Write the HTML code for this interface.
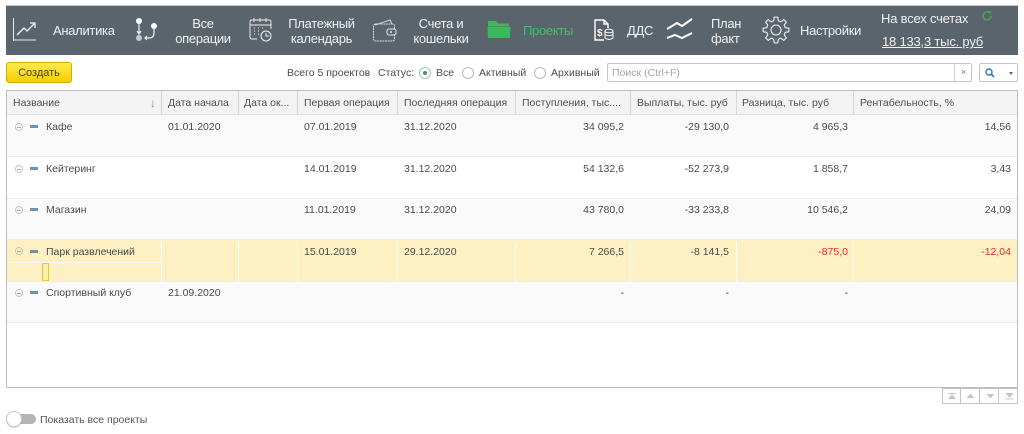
<!DOCTYPE html>
<html><head><meta charset="utf-8">
<style>
*{box-sizing:border-box}
html,body{margin:0;padding:0;width:1024px;height:434px;overflow:hidden;background:#fff}
body{font-family:"Liberation Sans",sans-serif;font-size:10.5px;color:#4b4b4b;position:relative}
.a{position:absolute;white-space:nowrap}
#nav{position:absolute;left:6px;top:5px;width:1012px;height:50px;background:#5a646c;border-top:1px solid #c9c9c9}
.n{position:absolute;color:#f2f2f2;font-size:13px;line-height:15px;text-align:center;white-space:nowrap;letter-spacing:-.3px}
.ic{position:absolute;overflow:visible;fill:none;stroke:#f0f0f0;stroke-width:1}
.th{position:absolute;top:91px;height:24px;line-height:24px;padding-left:6px;background:#f3f3f3;border-right:1px solid #d6d6d6;border-bottom:1px solid #e2e2e2;white-space:nowrap;color:#4e4e4e}
.row{position:absolute;left:7px;width:1010px;border-bottom:1px solid #ececec}
.c{position:absolute;line-height:13px;white-space:nowrap;color:#4a4a4a;margin-top:1px}
.r{text-align:right}
.m{position:absolute;left:15px;width:8px;height:8px;border:1px solid #c5c5c5;border-radius:50%}
.m:after{content:"";position:absolute;left:1px;top:2.5px;width:4px;height:1px;background:#aaa}
.d{position:absolute;left:30px;width:8px;height:3px;background:#6d92b5}
.v{position:absolute;width:1px;background:#fff}
.rad{position:absolute;top:67px;width:12px;height:12px;border:1px solid #b8b8b8;border-radius:50%;background:#fff}
.sb{position:absolute;top:388px;width:19px;height:16px;border:1px solid #c4c4c4;border-left:0;background:#fff}
</style></head><body>
<div id="nav"></div>

<svg class="ic" style="left:13px;top:18px" width="24" height="24" viewBox="0 0 24 24"><path d="M.5 0V23M0 22H23" stroke="#e8e8e8"/><path d="M4 17L11 10L14 13L21 6M17 5H22V10" stroke="#f5f5f5" stroke-width="1.3"/></svg>
<div class="n" style="left:53px;top:23px">Аналитика</div>

<svg class="ic" style="left:135px;top:18px" width="24" height="24" viewBox="0 0 24 24"><circle cx="4" cy="3" r="3" fill="#fff" stroke="none"/><circle cx="19" cy="8" r="3" fill="#fff" stroke="none"/><circle cx="4" cy="20" r="3" fill="#c8c8c8" stroke="none"/><path d="M4 6V15M2 13L4 16L6 13M19 11V15Q19 20 14 20H10M12 18L10 20L12 22" stroke-width="1.2"/></svg>
<div class="n" style="left:174px;top:16px;width:58px">Все<br>операции</div>

<svg class="ic" style="left:249px;top:18px" width="24" height="25" viewBox="0 0 24 25"><path d="M8 21H3Q1 21 1 19V4Q1 2 3 2H20Q22 2 22 4V11M1 7H22M5 0V4M11 0V4M17 0V4" stroke-width=".9"/><path d="M5 10H7M9 10H11M13 10H15M5 13H7M9 13H11M5 16H7M9 16H11" stroke-dasharray="1 1"/><circle cx="17" cy="18" r="5" stroke-width="1"/><path d="M17 15V18H20"/></svg>
<div class="n" style="left:284px;top:16px;width:75px">Платежный<br>календарь</div>

<svg class="ic" style="left:373px;top:19px" width="24" height="23" viewBox="0 0 24 23"><path d="M2 6L17 1L19 5" stroke="#d8d8d8"/><rect x=".5" y="5" width="21" height="17" rx="2" stroke="#d8d8d8" stroke-dasharray="2 .6"/><rect x="14" y="10" width="9" height="6" rx="2" fill="#5a646c" stroke="#e8e8e8"/><circle cx="18" cy="13" r="1" fill="#eee" stroke="none"/></svg>
<div class="n" style="left:408px;top:16px;width:66px">Счета и<br>кошельки</div>

<svg class="ic" style="left:487px;top:20px" width="24" height="19" viewBox="0 0 24 19"><path d="M1 1H9L11 3.5H22V6.4H1Z M.5 6.9H23.5L23 18H1Z" fill="#3cb85c" stroke="none"/></svg>
<div class="n" style="left:523px;top:23px;color:#43c069">Проекты</div>

<svg class="ic" style="left:594px;top:19px" width="20" height="22" viewBox="0 0 20 22"><path d="M10 21H1V1H10L14 5V9M10 1V5H14" stroke-width="1.4" stroke="#fff"/><text x="3" y="17" font-family="Liberation Sans" font-size="10" font-weight="bold" fill="#fff" stroke="none">$</text><ellipse cx="15" cy="12" rx="4" ry="1.8" stroke="#fff"/><path d="M11 12V19Q15 22 19 19V12M11 15.5Q15 18 19 15.5" stroke="#fff"/></svg>
<div class="n" style="left:627px;top:23px">ДДС</div>

<svg class="ic" style="left:666px;top:18px" width="27" height="24" viewBox="0 0 27 24"><path d="M1 11L11 5L16 8L26 1M1 20L9 17L16 20L26 15" stroke="#fff" stroke-width="2"/></svg>
<div class="n" style="left:711px;top:16px;text-align:left">План<br>факт</div>

<svg class="ic" style="left:762px;top:16px" width="28" height="28" viewBox="0 0 28 28"><circle cx="14" cy="14" r="5" stroke-width="1.1"/><g stroke-width="1.1" stroke-linejoin="round"><path id="t" d="M11.7 4.78L12.19 1.13H15.81L16.3 4.78A9.5 9.5 0 0 1 18.89 5.86"/><path transform="rotate(45 14 14)" d="M11.7 4.78L12.19 1.13H15.81L16.3 4.78A9.5 9.5 0 0 1 18.89 5.86"/><path transform="rotate(90 14 14)" d="M11.7 4.78L12.19 1.13H15.81L16.3 4.78A9.5 9.5 0 0 1 18.89 5.86"/><path transform="rotate(135 14 14)" d="M11.7 4.78L12.19 1.13H15.81L16.3 4.78A9.5 9.5 0 0 1 18.89 5.86"/><path transform="rotate(180 14 14)" d="M11.7 4.78L12.19 1.13H15.81L16.3 4.78A9.5 9.5 0 0 1 18.89 5.86"/><path transform="rotate(225 14 14)" d="M11.7 4.78L12.19 1.13H15.81L16.3 4.78A9.5 9.5 0 0 1 18.89 5.86"/><path transform="rotate(270 14 14)" d="M11.7 4.78L12.19 1.13H15.81L16.3 4.78A9.5 9.5 0 0 1 18.89 5.86"/><path transform="rotate(315 14 14)" d="M11.7 4.78L12.19 1.13H15.81L16.3 4.78A9.5 9.5 0 0 1 18.89 5.86"/></g></svg>
<div class="n" style="left:800px;top:23px">Настройки</div>

<div class="n" style="left:881px;top:11px;font-size:13px;letter-spacing:-.2px">На всех счетах</div>
<svg class="ic" style="left:981px;top:10px" width="12" height="12" viewBox="0 0 12 12"><path d="M10 6A4 4 0 1 1 8.5 2.8" stroke="#3fa84f" stroke-width="1.5"/><path d="M7.5 1L10.5 1.2L10 4.5Z" fill="#3fa84f" stroke="none"/></svg>
<div class="n" style="left:882px;top:34px;font-size:13px;letter-spacing:-.2px;text-decoration:underline">18 133,3 тыс. руб</div>

<div class="a" style="left:6px;top:62px;width:66px;height:21px;background:linear-gradient(#ffe94d,#f6cf00);border:1px solid #cfae00;border-radius:3px;text-align:center;line-height:20px;font-size:11px;color:#4a4320">Создать</div>

<div class="a" style="left:287px;top:67px">Всего 5 проектов</div>
<div class="a" style="left:378px;top:67px">Статус:</div>
<div class="rad" style="left:419px"></div><div class="a" style="left:423px;top:71px;width:4px;height:4px;border-radius:50%;background:#2f9e5f"></div>
<div class="a" style="left:436px;top:67px">Все</div>
<div class="rad" style="left:462px"></div>
<div class="a" style="left:479px;top:67px">Активный</div>
<div class="rad" style="left:534px"></div>
<div class="a" style="left:551px;top:67px">Архивный</div>

<div class="a" style="left:607px;top:63px;width:365px;height:19px;border:1px solid #c6c6c6;border-radius:2px;background:#fff;line-height:18px;padding-left:4px;color:#a5a5a5">Поиск (Ctrl+F)</div>
<div class="a" style="left:954px;top:64px;width:18px;height:17px;border-left:1px solid #d0d0d0;text-align:center;line-height:17px;font-size:9px;color:#777">×</div>
<div class="a" style="left:979px;top:63px;width:39px;height:19px;border:1px solid #c6c6c6;border-radius:2px;background:#fff"></div>
<svg class="ic" style="left:984px;top:67px" width="12" height="12" viewBox="0 0 12 12"><circle cx="5" cy="5" r="3" stroke="#2f78b5" stroke-width="1.4"/><path d="M7 7L10 10" stroke="#2f78b5" stroke-width="1.8"/></svg>
<div class="a" style="left:1009px;top:72px;border:2px solid transparent;border-top:3px solid #666"></div>

<div class="a" style="left:6px;top:90px;width:1012px;height:298px;border:1px solid #bdbdbd;background:#fff"></div>

<div class="row" style="top:115px;height:42px;background:#fafafa"></div>
<div class="row" style="top:157px;height:42px;background:#fff"></div>
<div class="row" style="top:199px;height:41px;background:#fafafa"></div>
<div class="row" style="top:240px;height:42px;background:#fdf1c3;border-bottom:1px solid #eee"></div>
<div class="row" style="top:282px;height:41px;background:#fafafa"></div>

<div class="v" style="left:161px;top:241px;height:40px"></div>
<div class="v" style="left:238px;top:241px;height:40px"></div>
<div class="v" style="left:297px;top:241px;height:40px"></div>
<div class="v" style="left:397px;top:241px;height:40px"></div>
<div class="v" style="left:515px;top:241px;height:40px"></div>
<div class="v" style="left:630px;top:241px;height:40px"></div>
<div class="v" style="left:736px;top:241px;height:40px"></div>
<div class="v" style="left:853px;top:241px;height:40px"></div>
<div class="a" style="left:7px;top:262px;width:154px;height:1px;background:#fff"></div>
<div class="a" style="left:42px;top:263px;width:7px;height:18px;background:#fdeeb0;border:1px solid #f3c52b"></div>

<div class="th" style="left:7px;width:155px">Название</div>
<div class="a" style="left:150px;top:96px;font-size:12px;color:#888">↓</div>
<div class="th" style="left:162px;width:77px">Дата начала</div>
<div class="th" style="left:239px;width:59px;padding-left:5px">Дата ок...</div>
<div class="th" style="left:298px;width:100px">Первая операция</div>
<div class="th" style="left:398px;width:118px">Последняя операция</div>
<div class="th" style="left:516px;width:115px">Поступления, тыс....</div>
<div class="th" style="left:631px;width:106px">Выплаты, тыс. руб</div>
<div class="th" style="left:737px;width:117px;padding-left:5px">Разница, тыс. руб</div>
<div class="th" style="left:854px;width:163px;border-right:0">Рентабельность, %</div>

<!-- row 1 -->
<div class="m" style="top:123px"></div><div class="d" style="top:125px"></div>
<div class="c" style="left:46px;top:120px">Кафе</div>
<div class="c" style="left:168px;top:120px">01.01.2020</div>
<div class="c" style="left:304px;top:120px">07.01.2019</div>
<div class="c" style="left:404px;top:120px">31.12.2020</div>
<div class="c r" style="left:516px;width:108px;top:120px">34 095,2</div>
<div class="c r" style="left:631px;width:98px;top:120px">-29 130,0</div>
<div class="c r" style="left:737px;width:111px;top:120px">4 965,3</div>
<div class="c r" style="left:854px;width:157px;top:120px">14,56</div>
<!-- row 2 -->
<div class="m" style="top:165px"></div><div class="d" style="top:167px"></div>
<div class="c" style="left:46px;top:162px">Кейтеринг</div>
<div class="c" style="left:304px;top:162px">14.01.2019</div>
<div class="c" style="left:404px;top:162px">31.12.2020</div>
<div class="c r" style="left:516px;width:108px;top:162px">54 132,6</div>
<div class="c r" style="left:631px;width:98px;top:162px">-52 273,9</div>
<div class="c r" style="left:737px;width:111px;top:162px">1 858,7</div>
<div class="c r" style="left:854px;width:157px;top:162px">3,43</div>
<!-- row 3 -->
<div class="m" style="top:206px"></div><div class="d" style="top:208px"></div>
<div class="c" style="left:46px;top:203px">Магазин</div>
<div class="c" style="left:304px;top:203px">11.01.2019</div>
<div class="c" style="left:404px;top:203px">31.12.2020</div>
<div class="c r" style="left:516px;width:108px;top:203px">43 780,0</div>
<div class="c r" style="left:631px;width:98px;top:203px">-33 233,8</div>
<div class="c r" style="left:737px;width:111px;top:203px">10 546,2</div>
<div class="c r" style="left:854px;width:157px;top:203px">24,09</div>
<!-- row 4 -->
<div class="m" style="top:247px"></div><div class="d" style="top:250px"></div>
<div class="c" style="left:46px;top:245px">Парк развлечений</div>
<div class="c" style="left:304px;top:245px">15.01.2019</div>
<div class="c" style="left:404px;top:245px">29.12.2020</div>
<div class="c r" style="left:516px;width:108px;top:245px">7 266,5</div>
<div class="c r" style="left:631px;width:98px;top:245px">-8 141,5</div>
<div class="c r" style="left:737px;width:111px;top:245px;color:#f0282d">-875,0</div>
<div class="c r" style="left:854px;width:157px;top:245px;color:#f0282d">-12,04</div>
<!-- row 5 -->
<div class="m" style="top:289px"></div><div class="d" style="top:291px"></div>
<div class="c" style="left:46px;top:286px">Спортивный клуб</div>
<div class="c" style="left:168px;top:286px">21.09.2020</div>
<div class="c r" style="left:516px;width:108px;top:286px">-</div>
<div class="c r" style="left:631px;width:98px;top:286px">-</div>
<div class="c r" style="left:737px;width:111px;top:286px">-</div>

<div class="sb" style="left:942px;border-left:1px solid #c4c4c4"></div>
<div class="sb" style="left:961px"></div>
<div class="sb" style="left:980px"></div>
<div class="sb" style="left:999px"></div>
<svg class="ic" style="left:942px;top:389px" width="76" height="15" viewBox="0 0 76 15"><g fill="#c4c4c4" stroke="none"><path d="M6 4H14V5H6ZM10 5L14 10H6Z"/><path d="M28.5 4.5L32.5 9H24.5Z"/><path d="M44.5 5H52.5L48.5 9.5Z"/><path d="M63.5 4H71.5L67.5 9ZM63.5 9.5H71.5V10.5H63.5Z"/></g></svg>

<div class="a" style="left:6px;top:414px;width:30px;height:10px;border-radius:5px;background:#b5b5b5"></div>
<div class="a" style="left:6px;top:411px;width:16px;height:16px;border-radius:50%;background:#fff;border:1px solid #c8c8c8;box-shadow:0 1px 1px rgba(0,0,0,.15)"></div>
<div class="a" style="left:40px;top:414px;color:#555">Показать все проекты</div>
</body></html>
